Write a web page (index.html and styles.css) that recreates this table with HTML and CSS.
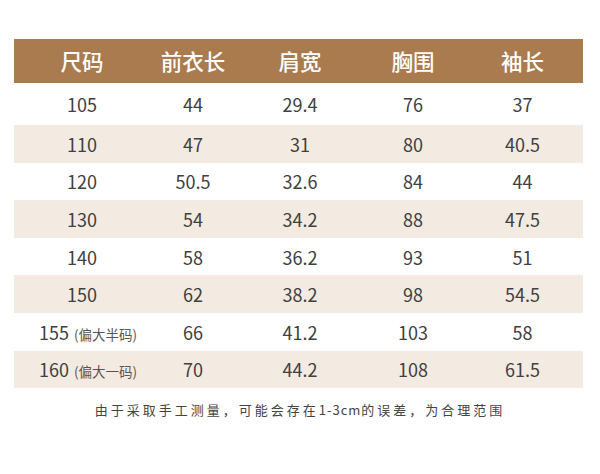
FILE: index.html
```html
<!DOCTYPE html>
<html lang="zh">
<head>
<meta charset="utf-8">
<link rel="stylesheet" href="styles.css">
</head>
<body>
<div class="page">
  <div class="table">
    <div class="row head">
      <div class="cell">尺码</div><div class="cell">前衣长</div><div class="cell">肩宽</div><div class="cell">胸围</div><div class="cell">袖长</div>
    </div>
    <div class="row first">
      <div class="cell">105</div><div class="cell">44</div><div class="cell">29.4</div><div class="cell">76</div><div class="cell">37</div>
    </div>
    <div class="row alt">
      <div class="cell">110</div><div class="cell">47</div><div class="cell">31</div><div class="cell">80</div><div class="cell">40.5</div>
    </div>
    <div class="row">
      <div class="cell">120</div><div class="cell">50.5</div><div class="cell">32.6</div><div class="cell">84</div><div class="cell">44</div>
    </div>
    <div class="row alt">
      <div class="cell">130</div><div class="cell">54</div><div class="cell">34.2</div><div class="cell">88</div><div class="cell">47.5</div>
    </div>
    <div class="row">
      <div class="cell">140</div><div class="cell">58</div><div class="cell">36.2</div><div class="cell">93</div><div class="cell">51</div>
    </div>
    <div class="row alt">
      <div class="cell">150</div><div class="cell">62</div><div class="cell">38.2</div><div class="cell">98</div><div class="cell">54.5</div>
    </div>
    <div class="row">
      <div class="cell size">155<span class="note">(偏大半码)</span></div><div class="cell">66</div><div class="cell">41.2</div><div class="cell">103</div><div class="cell">58</div>
    </div>
    <div class="row alt">
      <div class="cell size">160<span class="note">(偏大一码)</span></div><div class="cell">70</div><div class="cell">44.2</div><div class="cell">108</div><div class="cell">61.5</div>
    </div>
  </div>
  <p class="footnote">由于采取手工测量，可能会存在<span class="latin">1-3cm</span>的误差，为合理范围</p>
</div>
</body>
</html>
```

FILE: styles.css
```css
html, body {
  margin: 0;
  padding: 0;
  background: #ffffff;
}
body {
  font-family: "Noto Sans CJK SC", "Noto Sans", sans-serif;
  color: #404040;
}
.page {
  width: 600px;
  height: 474px;
  padding-top: 39px;
  box-sizing: border-box;
}
.table {
  margin: 0 17px 0 14px;
}
.row {
  display: grid;
  grid-template-columns: 136px 86px 128px 98px 121px;
  height: 37.6px;
  align-items: center;
}
.row.head {
  height: 44px;
  background: #a97b4f;
  color: #ffffff;
  font-weight: 500;
}
.row.first {
  height: 42px;
}
.row.alt {
  background: #f3ebe1;
}
.cell {
  text-align: center;
  font-size: 18px;
  line-height: 1;
  white-space: nowrap;
}
.head .cell {
  font-size: 21.5px;
}
.cell.size {
  padding-left: 12px;
}
.note {
  font-size: 13.5px;
  color: #555555;
  margin-left: 5px;
}
.footnote {
  margin: 14px 0 0;
  text-align: center;
  font-size: 13px;
  letter-spacing: 3px;
  color: #444444;
  line-height: 16px;
}
.latin {
  letter-spacing: 1px;
}
```
